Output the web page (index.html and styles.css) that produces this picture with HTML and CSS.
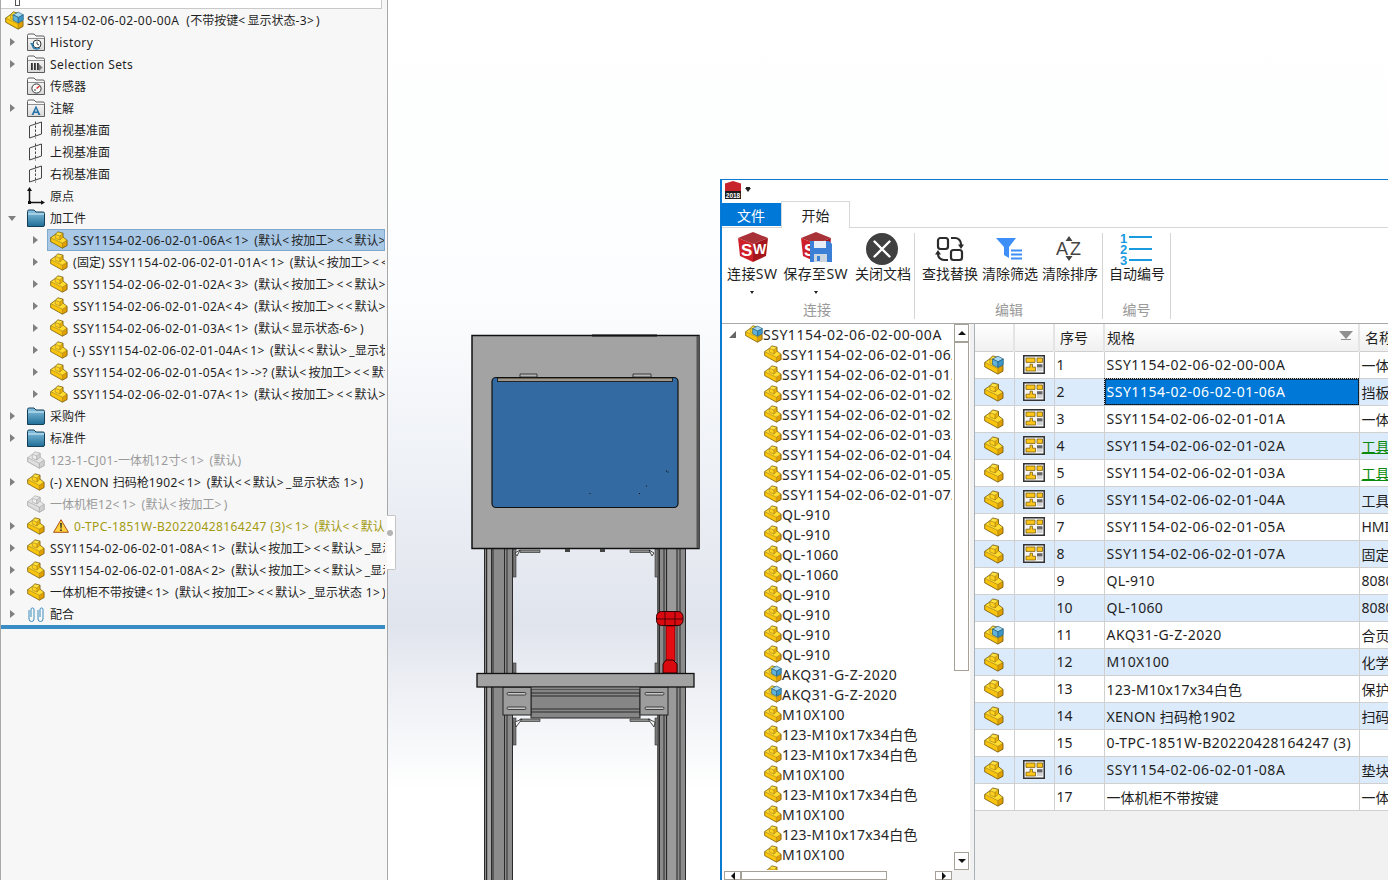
FILE: index.html
```html
<!DOCTYPE html>
<html lang="zh-CN">
<head>
<meta charset="utf-8">
<title>SSY1154-02-06-02-00-00A</title>
<link rel="stylesheet" href="styles.css">
</head>
<body>
<svg class="defs" width="0" height="0" aria-hidden="true">
  <defs>
    <linearGradient id="gFolder" x1="0" y1="0" x2="0" y2="1"><stop offset="0" stop-color="#8cc6e4"/><stop offset="1" stop-color="#1f6d96"/></linearGradient>
    <linearGradient id="gGrey" x1="0" y1="0" x2="0" y2="1"><stop offset="0" stop-color="#ffffff"/><stop offset="1" stop-color="#d8d8d8"/></linearGradient>
    <symbol id="part" viewBox="0 0 20 20">
      <path d="M.7 7.400 L5.900 3.800 L5.900 8 L11 10 L14.500 6.800 L19 10.300 L13.800 13.500 Z" fill="#ffdc2e"/>
      <path d="M5.900 3.800 L8.600 .9 L14.500 2.400 L11 5.500 Z" fill="#ffe23f"/>
      <path d="M5.900 3.800 L11 5.500 L11 10 L5.900 8 Z" fill="#ffd21f"/>
      <path d="M11 5.500 L14.500 2.400 L14.500 6.800 L11 10 Z" fill="#eab308"/>
      <path d="M.7 7.400 L13.800 13.500 L13.800 19.100 L.7 11.800 Z" fill="#f8c40e"/>
      <path d="M13.800 13.500 L19 10.300 L19 16.200 L13.800 19.100 Z" fill="#e0a000"/>
      <path d="M.7 7.400 L13.800 13.500 V19.100 M13.800 13.500 L19 10.300 M5.900 3.800 V8 L11 10 L14.500 6.800 M5.900 3.800 L11 5.500 L14.500 2.400 M11 5.500 V10" fill="none" stroke="#9a7400" stroke-width=".6" stroke-linejoin="round"/>
      <path d="M.7 7.400 L5.900 3.800 L8.600 .9 L14.500 2.400 L14.500 6.800 L19 10.300 L19 16.200 L13.800 19.100 L.7 11.800 Z" fill="none" stroke="#6e5200" stroke-width=".8" stroke-linejoin="round"/>
    </symbol>
    <symbol id="ghost" viewBox="0 0 20 20">
      <g stroke="#adadad" stroke-width=".8" stroke-linejoin="round" fill="#e6e6e6">
        <path d="M.7 7.400 L5.900 3.800 L8.600 .9 L14.500 2.400 L14.500 6.800 L19 10.300 L19 16.200 L13.800 19.100 L.7 11.800 Z"/>
        <path d="M5.900 3.800 L11 5.500 L11 10 L5.900 8 Z" fill="#eeeeee"/>
        <path d="M11 5.500 L14.500 2.400 L14.500 6.800 L11 10 Z" fill="#d4d4d4"/>
        <path d="M.7 7.400 L13.800 13.500 L13.800 19.100 L.7 11.800 Z" fill="#dedede"/>
        <path d="M13.800 13.500 L19 10.300 L19 16.200 L13.800 19.100 Z" fill="#cfcfcf"/>
      </g>
    </symbol>
    <symbol id="assy" viewBox="0 0 20 20">
      <use href="#part" width="20" height="20"/>
      <g stroke="#25607f" stroke-width=".7" stroke-linejoin="round">
        <path d="M8.500 4 L14 1.200 L19.300 4 L14 6.800 Z" fill="#a6d8f2"/>
        <path d="M8.500 4 L14 6.800 L14 12.500 L8.500 9.700 Z" fill="#62b2de"/>
        <path d="M14 6.800 L19.300 4 L19.300 9.700 L14 12.500 Z" fill="#3d95c8"/>
      </g>
    </symbol>
    <symbol id="folder-blue" viewBox="0 0 18 18">
      <path d="M.5 2.500 Q.5 1 2 1 H7 L9 3 H16 Q17.500 3 17.500 4.500 V16 Q17.500 17.500 16 17.500 H.5 Z" fill="url(#gFolder)" stroke="#143f58"/>
      <path d="M1 5 H17" stroke="#d6eef9" stroke-width="1"/>
    </symbol>
    <symbol id="folder-grey" viewBox="0 0 18 18">
      <path d="M.5 2.500 Q.5 1 2 1 H7 L9 3 H16 Q17.500 3 17.500 4.500 V17.500 H.5 Z" fill="url(#gGrey)" stroke="#5c5c5c"/>
      <path d="M1 5.500 H17" stroke="#8f8f8f" stroke-width="1"/>
    </symbol>
    <symbol id="f-history" viewBox="0 0 18 18">
      <use href="#folder-grey" width="18" height="18"/>
      <circle cx="10" cy="11" r="4" fill="#fff" stroke="#333" stroke-width="1"/>
      <path d="M10 8.600 V11 L12 12" fill="none" stroke="#333" stroke-width=".9"/>
      <path d="M5.200 12 A5 5 0 0 0 10 16 A5 5 0 0 0 13 15" fill="none" stroke="#2a7fb6" stroke-width="1.400"/>
      <path d="M3 10 H7 L5.200 13 Z" fill="#2a7fb6"/>
    </symbol>
    <symbol id="f-sets" viewBox="0 0 18 18">
      <use href="#folder-grey" width="18" height="18"/>
      <path d="M4 8 H5.800 V15 H4 Z M7 8 H8.800 V15 H7 Z M10 8 H11.800 V15 H10 Z" fill="#333"/>
      <path d="M12 9 L15.500 12.500 L12 16 Z" fill="#777"/>
    </symbol>
    <symbol id="f-sensor" viewBox="0 0 18 18">
      <use href="#folder-grey" width="18" height="18"/>
      <circle cx="9.500" cy="11.500" r="4.600" fill="#fff" stroke="#333" stroke-width="1"/>
      <path d="M9.500 11.500 L12.500 9" stroke="#d8352a" stroke-width="1.500"/>
      <path d="M7 13 H9" stroke="#333" stroke-width="1"/>
    </symbol>
    <symbol id="f-note" viewBox="0 0 18 18">
      <use href="#folder-grey" width="18" height="18"/>
      <path d="M9 6.500 L13.500 16 H11.400 L10.600 14 H7.300 L6.500 16 H4.500 Z M8 12.400 H10 L9 9.600 Z" fill="#2573a8"/>
    </symbol>
    <symbol id="plane" viewBox="0 0 16 18">
      <path d="M1.500 5 L13.500 1 V13 L1.500 17 Z" fill="none" stroke="#444" stroke-width="1"/>
      <path d="M7.500 .5 V17.500" stroke="#444" stroke-width="1" stroke-dasharray="2.400 1.600"/>
    </symbol>
    <symbol id="origin" viewBox="0 0 18 18">
      <path d="M2.500 3 V15.500 H15" fill="none" stroke="#111" stroke-width="1.500"/>
      <path d="M2.500 0 L5 4 H0 Z M18 15.500 L14 13.200 V17.800 Z" fill="#111"/>
      <rect x="1" y="14" width="3" height="3" fill="#111"/>
    </symbol>
    <symbol id="mates" viewBox="0 0 18 18">
      <path d="M2 5 V14 A2.400 2.400 0 0 0 7 14 V4 A1.600 1.600 0 0 0 4 4 V12" fill="none" stroke="#3a8dbd" stroke-width="1"/>
      <path d="M11 5 V14 A2.400 2.400 0 0 0 16 14 V4 A1.600 1.600 0 0 0 13 4 V12" fill="none" stroke="#3a8dbd" stroke-width="1"/>
    </symbol>
    <symbol id="warn" viewBox="0 0 16 14">
      <path d="M8 .7 L15.400 13.300 H.6 Z" fill="#ffd23f" stroke="#a8501a" stroke-width="1" stroke-linejoin="round"/>
      <path d="M7.200 4 H8.800 L8.500 9.500 H7.500 Z M7.200 10.400 H8.800 V12 H7.200 Z" fill="#222"/>
    </symbol>
    <symbol id="doc" viewBox="0 0 22 19">
      <rect x=".75" y=".75" width="20.500" height="17.500" fill="#f4f4f4" stroke="#333" stroke-width="1.500"/>
      <path d="M3 3 H12 V7.400 H3 Z M14 3 H19.500 V7.400 H14 Z M7 9.200 H9.500 V12.200 H12.500 V16 H3 V12.200 H7 Z" fill="#ffc61a" stroke="#6e5200" stroke-width=".7"/>
      <rect x="14" y="9.200" width="5.500" height="3.400" fill="#666"/>
      <rect x="14" y="12.600" width="5.500" height="3.400" fill="#d2d2d2"/>
    </symbol>
    <symbol id="sw" viewBox="0 0 30 30">
      <path d="M15 0 L30 6 L15 12 L0 6 Z" fill="#a83238"/>
      <path d="M0 6 L15 12 V30 L2 24 Z" fill="#cf1f28"/>
      <path d="M15 12 L30 6 L28 24 L15 30 Z" fill="#a5161c"/>
      <text x="3" y="24" class="sw-letter">S</text>
      <text x="15" y="22" class="sw-letter sw-w">W</text>
    </symbol>
  </defs>
</svg>

<aside class="side">
  <div class="search"><span class="search-mark"></span></div>
  <div class="tree">
    <div class="row root"><div class="cell"><svg class="ic-root"><use href="#assy"/></svg><span>SSY1154-02-06-02-00-00A&nbsp; (<em>不带按键</em><b>&lt;</b><em>显示状态</em>-3<b>&gt;</b>)</span></div></div>
    <div class="row l1"><i class="arr"></i><div class="cell"><svg class="ic"><use href="#f-history"/></svg><span>History</span></div></div>
    <div class="row l1"><i class="arr"></i><div class="cell"><svg class="ic"><use href="#f-sets"/></svg><span>Selection Sets</span></div></div>
    <div class="row l1"><i class="arr none"></i><div class="cell"><svg class="ic"><use href="#f-sensor"/></svg><span><em>传感器</em></span></div></div>
    <div class="row l1"><i class="arr"></i><div class="cell"><svg class="ic"><use href="#f-note"/></svg><span><em>注解</em></span></div></div>
    <div class="row l1"><i class="arr none"></i><div class="cell"><svg class="ic"><use href="#plane"/></svg><span><em>前视基准面</em></span></div></div>
    <div class="row l1"><i class="arr none"></i><div class="cell"><svg class="ic"><use href="#plane"/></svg><span><em>上视基准面</em></span></div></div>
    <div class="row l1"><i class="arr none"></i><div class="cell"><svg class="ic"><use href="#plane"/></svg><span><em>右视基准面</em></span></div></div>
    <div class="row l1"><i class="arr none"></i><div class="cell"><svg class="ic"><use href="#origin"/></svg><span><em>原点</em></span></div></div>
    <div class="row l1"><i class="arr open"></i><div class="cell"><svg class="ic"><use href="#folder-blue"/></svg><span><em>加工件</em></span></div></div>
    <div class="row l2"><i class="arr"></i><div class="cell sel"><svg class="ic"><use href="#part"/></svg><span>SSY1154-02-06-02-01-06A<b>&lt;</b>1<b>&gt;</b> (<em>默认</em><b>&lt;</b><em>按加工</em><b>&gt;&lt;&lt;</b><em>默认</em><b>&gt;</b>_<em>显示状态</em> 1<b>&gt;</b>)</span></div></div>
    <div class="row l2"><i class="arr"></i><div class="cell"><svg class="ic"><use href="#part"/></svg><span>(<em>固定</em>) SSY1154-02-06-02-01-01A<b>&lt;</b>1<b>&gt;</b> (<em>默认</em><b>&lt;</b><em>按加工</em><b>&gt;&lt;&lt;</b><em>默认</em><b>&gt;</b>_<em>显示状态</em> 1<b>&gt;</b>)</span></div></div>
    <div class="row l2"><i class="arr"></i><div class="cell"><svg class="ic"><use href="#part"/></svg><span>SSY1154-02-06-02-01-02A<b>&lt;</b>3<b>&gt;</b> (<em>默认</em><b>&lt;</b><em>按加工</em><b>&gt;&lt;&lt;</b><em>默认</em><b>&gt;</b>_<em>显示状态</em> 1<b>&gt;</b>)</span></div></div>
    <div class="row l2"><i class="arr"></i><div class="cell"><svg class="ic"><use href="#part"/></svg><span>SSY1154-02-06-02-01-02A<b>&lt;</b>4<b>&gt;</b> (<em>默认</em><b>&lt;</b><em>按加工</em><b>&gt;&lt;&lt;</b><em>默认</em><b>&gt;</b>_<em>显示状态</em> 1<b>&gt;</b>)</span></div></div>
    <div class="row l2"><i class="arr"></i><div class="cell"><svg class="ic"><use href="#part"/></svg><span>SSY1154-02-06-02-01-03A<b>&lt;</b>1<b>&gt;</b> (<em>默认</em><b>&lt;</b><em>显示状态</em>-6<b>&gt;</b>)</span></div></div>
    <div class="row l2"><i class="arr"></i><div class="cell"><svg class="ic"><use href="#part"/></svg><span>(-) SSY1154-02-06-02-01-04A<b>&lt;</b>1<b>&gt;</b> (<em>默认</em><b>&lt;&lt;</b><em>默认</em><b>&gt;</b>_<em>显示状态</em> 1<b>&gt;</b>)</span></div></div>
    <div class="row l2"><i class="arr"></i><div class="cell"><svg class="ic"><use href="#part"/></svg><span>SSY1154-02-06-02-01-05A<b>&lt;</b>1<b>&gt;</b>-&gt;? (<em>默认</em><b>&lt;</b><em>按加工</em><b>&gt;&lt;&lt;</b><em>默认</em><b>&gt;</b>_<em>显示状态</em> 1<b>&gt;</b>)</span></div></div>
    <div class="row l2"><i class="arr"></i><div class="cell"><svg class="ic"><use href="#part"/></svg><span>SSY1154-02-06-02-01-07A<b>&lt;</b>1<b>&gt;</b> (<em>默认</em><b>&lt;</b><em>按加工</em><b>&gt;&lt;&lt;</b><em>默认</em><b>&gt;</b>_<em>显示状态</em> 1<b>&gt;</b>)</span></div></div>
    <div class="row l1"><i class="arr"></i><div class="cell"><svg class="ic"><use href="#folder-blue"/></svg><span><em>采购件</em></span></div></div>
    <div class="row l1"><i class="arr"></i><div class="cell"><svg class="ic"><use href="#folder-blue"/></svg><span><em>标准件</em></span></div></div>
    <div class="row l1 dim"><i class="arr none"></i><div class="cell"><svg class="ic"><use href="#ghost"/></svg><span>123-1-CJ01-<em>一体机</em>12<em>寸</em><b>&lt;</b>1<b>&gt;</b> (<em>默认</em>)</span></div></div>
    <div class="row l1"><i class="arr"></i><div class="cell"><svg class="ic"><use href="#part"/></svg><span>(-) XENON <em>扫码枪</em>1902<b>&lt;</b>1<b>&gt;</b> (<em>默认</em><b>&lt;&lt;</b><em>默认</em><b>&gt;</b>_<em>显示状态</em> 1<b>&gt;</b>)</span></div></div>
    <div class="row l1 dim"><i class="arr none"></i><div class="cell"><svg class="ic"><use href="#ghost"/></svg><span><em>一体机柜</em>12<b>&lt;</b>1<b>&gt;</b> (<em>默认</em><b>&lt;</b><em>按加工</em><b>&gt;</b>)</span></div></div>
    <div class="row l1 olive"><i class="arr"></i><div class="cell"><svg class="ic"><use href="#part"/></svg><svg class="ic-warn"><use href="#warn"/></svg><span>0-TPC-1851W-B20220428164247 (3)<b>&lt;</b>1<b>&gt;</b> (<em>默认</em><b>&lt;&lt;</b><em>默认</em><b>&gt;</b>_<em>显示状态</em> 1<b>&gt;</b>)</span></div></div>
    <div class="row l1"><i class="arr"></i><div class="cell"><svg class="ic"><use href="#part"/></svg><span>SSY1154-02-06-02-01-08A<b>&lt;</b>1<b>&gt;</b> (<em>默认</em><b>&lt;</b><em>按加工</em><b>&gt;&lt;&lt;</b><em>默认</em><b>&gt;</b>_<em>显示状态</em> 1<b>&gt;</b>)</span></div></div>
    <div class="row l1"><i class="arr"></i><div class="cell"><svg class="ic"><use href="#part"/></svg><span>SSY1154-02-06-02-01-08A<b>&lt;</b>2<b>&gt;</b> (<em>默认</em><b>&lt;</b><em>按加工</em><b>&gt;&lt;&lt;</b><em>默认</em><b>&gt;</b>_<em>显示状态</em> 1<b>&gt;</b>)</span></div></div>
    <div class="row l1"><i class="arr"></i><div class="cell"><svg class="ic"><use href="#part"/></svg><span><em>一体机柜不带按键</em><b>&lt;</b>1<b>&gt;</b> (<em>默认</em><b>&lt;</b><em>按加工</em><b>&gt;&lt;&lt;</b><em>默认</em><b>&gt;</b>_<em>显示状态</em> 1<b>&gt;</b>)</span></div></div>
    <div class="row l1"><i class="arr"></i><div class="cell"><svg class="ic"><use href="#mates"/></svg><span><em>配合</em></span></div></div>
  </div>
  <div class="tree-end"></div>
  <div class="grip"><span class="grip-dot"></span></div>
</aside>

<main class="canvas">
  <svg class="model" viewBox="388 0 1000 880" aria-hidden="true">
    <!-- legs -->
    <g>
      <rect x="484" y="549" width="29" height="331" fill="#8b8b8b"/>
      <rect x="657" y="549" width="29" height="331" fill="#8b8b8b"/>
      <path d="M484.500 549 V880 M486.500 549 V880 M491.500 549 V880 M493 549 V880 M504.500 549 V880 M507 549 V880 M512.500 549 V880 M658 549 V880 M659.500 549 V880 M664 549 V880 M666.500 549 V880 M677 549 V880 M680 549 V880 M685.500 549 V880" stroke="#2a2a2a" stroke-width="1"/>
      <rect x="488" y="549" width="3" height="331" fill="#a6a6a6"/>
      <rect x="668" y="549" width="8" height="331" fill="#9a9a9a"/>
      <rect x="513" y="549" width="3" height="28" fill="#777" stroke="#333" stroke-width=".6"/>
      <rect x="655" y="549" width="3" height="28" fill="#777" stroke="#333" stroke-width=".6"/>
      <rect x="513" y="663" width="3" height="10" fill="#777" stroke="#333" stroke-width=".6"/>
      <rect x="655" y="663" width="3" height="10" fill="#777" stroke="#333" stroke-width=".6"/>
      <rect x="513" y="718" width="3" height="27" fill="#777" stroke="#333" stroke-width=".6"/>
      <rect x="655" y="718" width="3" height="27" fill="#777" stroke="#333" stroke-width=".6"/>
    </g>
    <!-- cabinet -->
    <rect x="472" y="335.500" width="227" height="213" fill="#a3a3a3" stroke="#111" stroke-width="1.500"/>
    <path d="M592 335.500 H657" stroke="#111" stroke-width="2"/>
    <rect x="696.500" y="336" width="2.500" height="212" fill="#555"/>
    <rect x="492" y="377.500" width="186" height="130" rx="4" fill="#336aa1" stroke="#111" stroke-width="1.200"/>
    <rect x="497.500" y="378" width="175" height="3.500" fill="#9f9689" stroke="#111" stroke-width=".8"/>
    <path d="M520 374 H537 V377 H520 Z M633 374 H651 V377 H633 Z" fill="#b5b5b5" stroke="#222" stroke-width=".8"/>
    <path d="M589.500 493.500 h1 M639 493.500 h1 M646 486 h1 M666 471 h1 M667.500 472 h1" stroke="#111" stroke-width="1"/>
    <!-- fittings under the cabinet -->
    <path d="M520 550 H540 V552.500 H520 Z M630 550 H650 V552.500 H630 Z" fill="#8f8f8f" stroke="#333" stroke-width=".7"/>
    <path d="M515 553 L520 550 L517 556 Z M654 553 L649 550 L652 556 Z" fill="#eee" stroke="#222" stroke-width=".8"/>
    <rect x="565" y="549" width="5" height="3" fill="#444"/><rect x="600" y="549" width="5" height="3" fill="#444"/>
    <!-- red tower -->
    <rect x="666" y="626" width="9" height="35" fill="#e50d12" stroke="#5a0000" stroke-width=".8"/>
    <rect x="656.500" y="611.500" width="26.500" height="14" rx="5" fill="#d8090f" stroke="#300" stroke-width="1"/>
    <path d="M657 619 H683 M665 612 V625 M675 612 V625" stroke="#300" stroke-width=".8"/>
    <path d="M663 673 V664 L666 660 H673 L677 664 V673 Z" fill="#d8090f" stroke="#300" stroke-width="1"/>
    <!-- crossbeam and brackets -->
    <rect x="531" y="689" width="109" height="29" fill="#868686" stroke="#222" stroke-width="1"/>
    <path d="M531 693 H640 M531 696 H640 M531 709 H640 M531 712 H640" stroke="#2a2a2a" stroke-width="1"/>
    <rect x="503" y="687" width="28" height="28" fill="#9d9d9d" stroke="#222" stroke-width="1"/>
    <rect x="640" y="687" width="28" height="28" fill="#9d9d9d" stroke="#222" stroke-width="1"/>
    <g fill="#c8c8c8" stroke="#222" stroke-width=".8">
      <rect x="507" y="692.500" width="19" height="2.500" rx="1.200"/><rect x="507" y="707" width="19" height="2.500" rx="1.200"/>
      <rect x="645" y="692.500" width="19" height="2.500" rx="1.200"/><rect x="645" y="707" width="19" height="2.500" rx="1.200"/>
    </g>
    <path d="M520 719 H540 V721.500 H520 Z M630 719 H650 V721.500 H630 Z" fill="#8f8f8f" stroke="#333" stroke-width=".7"/>
    <path d="M515 722 L522 719 L516 727 Z M655 722 L648 719 L654 727 Z" fill="#f4f4f4" stroke="#222" stroke-width=".8"/>
    <!-- table top -->
    <rect x="477" y="673.500" width="217" height="13.500" fill="#a2a2a2" stroke="#111" stroke-width="1.300"/>
  </svg>

  <section class="window">
    <header class="titlebar">
      <svg class="app-ico" viewBox="0 0 16 18"><path d="M8 0 L16 2.500 V11 H0 V2.500 Z" fill="#c8242b"/><rect y="10" width="16" height="8" fill="#1c1c1c"/><text x="8" y="16.600" class="year">2018</text></svg>
      <i class="qa-arrow"></i>
    </header>
    <nav class="tabs">
      <span class="tab file">文件</span>
      <span class="tab home">开始</span>
    </nav>
    <div class="ribbon">
      <div class="group g1">
        <div class="btns">
          <div class="btn"><svg class="ri"><use href="#sw" x="11" y="2" width="30" height="30"/></svg><span class="sw-label">连接SW</span><i class="drop"></i></div>
          <div class="btn"><svg class="ri"><use href="#sw" x="17" y="2" width="30" height="30"/>
            <path d="M26 11 H45 L48 14 V32 H26 Z" fill="#3b7fd6"/><rect x="30" y="11" width="12" height="7" fill="#e8eef6"/><rect x="30" y="24" width="13" height="8" fill="#cdd6e0"/><rect x="33" y="26" width="3" height="5" fill="#3b7fd6"/></svg><span class="sw-label">保存至SW</span><i class="drop"></i></div>
          <div class="btn"><svg class="ri"><circle cx="27" cy="19" r="16" fill="#404040"/><path d="M19.500 11.500 L34.500 26.500 M34.500 11.500 L19.500 26.500" stroke="#fff" stroke-width="2.400" stroke-linecap="round"/></svg><span>关闭文档</span></div>
        </div>
        <div class="glabel">连接</div>
      </div>
      <div class="group g2">
        <div class="btns">
          <div class="btn"><svg class="ri"><g fill="none" stroke="#2b2b2b" stroke-width="2.200"><rect x="16" y="8" width="10" height="11" rx="2.500"/><rect x="29" y="20" width="11" height="10" rx="2.500"/><path d="M29 8 H33 A6 6 0 0 1 39 14 V16"/><path d="M26 30 H22 A6 6 0 0 1 16 24 V22"/></g><path d="M39 19 L36 14.500 H42 Z M16 20 L13 24.500 H19 Z" fill="#2b2b2b"/></svg><span>查找替换</span></div>
          <div class="btn"><svg class="ri"><path d="M14 8 H34 L27 17 V28 L22 25 V17 Z" fill="#3d8ef8"/><path d="M29 20.500 H40 M29 24.500 H40 M29 28.500 H40" stroke="#3d8ef8" stroke-width="2"/></svg><span>清除筛选</span></div>
          <div class="btn"><svg class="ri"><text x="14" y="25" class="az">A</text><text x="28" y="25" class="az">Z</text><path d="M27 6 L30.500 11 H23.500 Z M27 31 L30.500 26 H23.500 Z" fill="#444"/></svg><span>清除排序</span></div>
        </div>
        <div class="glabel">编辑</div>
      </div>
      <div class="group g3">
        <div class="btns">
          <div class="btn"><svg class="ri"><text x="11" y="13" class="num">1</text><text x="11" y="24" class="num">2</text><text x="11" y="35" class="num">3</text><path d="M20 7 H43 M20 19 H43 M20 30 H43" stroke="#1a9be0" stroke-width="1.800"/></svg><span>自动编号</span></div>
        </div>
        <div class="glabel">编号</div>
      </div>
    </div>
    <div class="workspace">
      <div class="treebox">
        <div class="t-list">
          <div class="t-row t-root"><i class="t-open"></i><svg class="t-ic"><use href="#assy"/></svg><span class="w">SSY1154-02-06-02-00-00A</span></div>
          <div class="t-row"><svg class="t-ic"><use href="#part"/></svg><span class="w">SSY1154-02-06-02-01-06A</span></div>
          <div class="t-row"><svg class="t-ic"><use href="#part"/></svg><span class="w">SSY1154-02-06-02-01-01A</span></div>
          <div class="t-row"><svg class="t-ic"><use href="#part"/></svg><span class="w">SSY1154-02-06-02-01-02A</span></div>
          <div class="t-row"><svg class="t-ic"><use href="#part"/></svg><span class="w">SSY1154-02-06-02-01-02A</span></div>
          <div class="t-row"><svg class="t-ic"><use href="#part"/></svg><span class="w">SSY1154-02-06-02-01-03A</span></div>
          <div class="t-row"><svg class="t-ic"><use href="#part"/></svg><span class="w">SSY1154-02-06-02-01-04A</span></div>
          <div class="t-row"><svg class="t-ic"><use href="#part"/></svg><span class="w">SSY1154-02-06-02-01-05A</span></div>
          <div class="t-row"><svg class="t-ic"><use href="#part"/></svg><span class="w">SSY1154-02-06-02-01-07A</span></div>
          <div class="t-row"><svg class="t-ic"><use href="#part"/></svg><span class="k">QL-910</span></div>
          <div class="t-row"><svg class="t-ic"><use href="#part"/></svg><span class="k">QL-910</span></div>
          <div class="t-row"><svg class="t-ic"><use href="#part"/></svg><span class="k">QL-1060</span></div>
          <div class="t-row"><svg class="t-ic"><use href="#part"/></svg><span class="k">QL-1060</span></div>
          <div class="t-row"><svg class="t-ic"><use href="#part"/></svg><span class="k">QL-910</span></div>
          <div class="t-row"><svg class="t-ic"><use href="#part"/></svg><span class="k">QL-910</span></div>
          <div class="t-row"><svg class="t-ic"><use href="#part"/></svg><span class="k">QL-910</span></div>
          <div class="t-row"><svg class="t-ic"><use href="#part"/></svg><span class="k">QL-910</span></div>
          <div class="t-row"><svg class="t-ic"><use href="#assy"/></svg><span class="w">AKQ31-G-Z-2020</span></div>
          <div class="t-row"><svg class="t-ic"><use href="#assy"/></svg><span class="w">AKQ31-G-Z-2020</span></div>
          <div class="t-row"><svg class="t-ic"><use href="#part"/></svg><span class="k">M10X100</span></div>
          <div class="t-row"><svg class="t-ic"><use href="#part"/></svg><span class="k">123-M10x17x34白色</span></div>
          <div class="t-row"><svg class="t-ic"><use href="#part"/></svg><span class="k">123-M10x17x34白色</span></div>
          <div class="t-row"><svg class="t-ic"><use href="#part"/></svg><span class="k">M10X100</span></div>
          <div class="t-row"><svg class="t-ic"><use href="#part"/></svg><span class="k">123-M10x17x34白色</span></div>
          <div class="t-row"><svg class="t-ic"><use href="#part"/></svg><span class="k">M10X100</span></div>
          <div class="t-row"><svg class="t-ic"><use href="#part"/></svg><span class="k">123-M10x17x34白色</span></div>
          <div class="t-row"><svg class="t-ic"><use href="#part"/></svg><span class="k">M10X100</span></div>
          <div class="t-row"><svg class="t-ic"><use href="#part"/></svg></div>
        </div>
        <div class="vbar">
          <div class="sb-btn"><i class="tri-up"></i></div>
          <div class="sb-thumb"></div>
          <div class="sb-track"></div>
          <div class="sb-btn"><i class="tri-down"></i></div>
        </div>
        <div class="hbar">
          <div class="sb-btn h"><i class="tri-left"></i></div>
          <div class="sb-thumb h"></div>
          <div class="sb-track"></div>
          <div class="sb-btn h"><i class="tri-right"></i></div>
        </div>
        <div class="corner"></div>
      </div>
      <div class="gridbox">
        <table class="grid">
          <colgroup><col class="c1"><col class="c2"><col class="c3"><col class="c4"><col class="c5"></colgroup>
          <thead>
            <tr><th></th><th></th><th class="pad">序号</th><th class="spec">规格<i class="sort"></i></th><th class="pad">名称</th></tr>
          </thead>
          <tbody>
            <tr><td class="i"><svg class="g-part"><use href="#assy"/></svg></td><td class="i"><svg class="g-doc"><use href="#doc"/></svg></td><td>1</td><td class="w">SSY1154-02-06-02-00-00A</td><td>一体机</td></tr>
            <tr class="alt"><td class="i"><svg class="g-part"><use href="#part"/></svg></td><td class="i"><svg class="g-doc"><use href="#doc"/></svg></td><td>2</td><td class="w current">SSY1154-02-06-02-01-06A</td><td>挡板</td></tr>
            <tr><td class="i"><svg class="g-part"><use href="#part"/></svg></td><td class="i"><svg class="g-doc"><use href="#doc"/></svg></td><td>3</td><td class="w">SSY1154-02-06-02-01-01A</td><td>一体机</td></tr>
            <tr class="alt"><td class="i"><svg class="g-part"><use href="#part"/></svg></td><td class="i"><svg class="g-doc"><use href="#doc"/></svg></td><td>4</td><td class="w">SSY1154-02-06-02-01-02A</td><td class="green">工具</td></tr>
            <tr><td class="i"><svg class="g-part"><use href="#part"/></svg></td><td class="i"><svg class="g-doc"><use href="#doc"/></svg></td><td>5</td><td class="w">SSY1154-02-06-02-01-03A</td><td class="green">工具</td></tr>
            <tr class="alt"><td class="i"><svg class="g-part"><use href="#part"/></svg></td><td class="i"><svg class="g-doc"><use href="#doc"/></svg></td><td>6</td><td class="w">SSY1154-02-06-02-01-04A</td><td>工具</td></tr>
            <tr><td class="i"><svg class="g-part"><use href="#part"/></svg></td><td class="i"><svg class="g-doc"><use href="#doc"/></svg></td><td>7</td><td class="w">SSY1154-02-06-02-01-05A</td><td>HMI</td></tr>
            <tr class="alt"><td class="i"><svg class="g-part"><use href="#part"/></svg></td><td class="i"><svg class="g-doc"><use href="#doc"/></svg></td><td>8</td><td class="w">SSY1154-02-06-02-01-07A</td><td>固定</td></tr>
            <tr><td class="i"><svg class="g-part"><use href="#part"/></svg></td><td></td><td>9</td><td class="k">QL-910</td><td>8080</td></tr>
            <tr class="alt"><td class="i"><svg class="g-part"><use href="#part"/></svg></td><td></td><td>10</td><td class="k">QL-1060</td><td>8080</td></tr>
            <tr><td class="i"><svg class="g-part"><use href="#assy"/></svg></td><td></td><td>11</td><td class="w">AKQ31-G-Z-2020</td><td>合页</td></tr>
            <tr class="alt"><td class="i"><svg class="g-part"><use href="#part"/></svg></td><td></td><td>12</td><td class="k">M10X100</td><td>化学</td></tr>
            <tr><td class="i"><svg class="g-part"><use href="#part"/></svg></td><td></td><td>13</td><td class="k">123-M10x17x34白色</td><td>保护</td></tr>
            <tr class="alt"><td class="i"><svg class="g-part"><use href="#part"/></svg></td><td></td><td>14</td><td class="k">XENON 扫码枪1902</td><td>扫码</td></tr>
            <tr><td class="i"><svg class="g-part"><use href="#part"/></svg></td><td></td><td>15</td><td class="m">0-TPC-1851W-B20220428164247 (3)</td><td></td></tr>
            <tr class="alt"><td class="i"><svg class="g-part"><use href="#part"/></svg></td><td class="i"><svg class="g-doc"><use href="#doc"/></svg></td><td>16</td><td class="w">SSY1154-02-06-02-01-08A</td><td>垫块</td></tr>
            <tr><td class="i"><svg class="g-part"><use href="#part"/></svg></td><td></td><td>17</td><td>一体机柜不带按键</td><td>一体机</td></tr>
          </tbody>
        </table>
      </div>
    </div>
  </section>
</main>
</body>
</html>
```

FILE: styles.css
```css
* { box-sizing: border-box; }
html, body { margin: 0; height: 880px; overflow: hidden; }
body {
  display: flex;
  width: 1388px;
  font-family: "Noto Sans", "Noto Sans CJK SC", sans-serif;
  color: #1f1f1f;
  background: #fff;
}
.defs { position: absolute; }
.sw-letter { font: bold 17px "Liberation Sans", sans-serif; fill: #fff; }
.sw-w { font-size: 14px; }

/* feature tree */
.side {
  position: relative;
  z-index: 1;
  flex: 0 0 388px;
  height: 880px;
  background: #f7f7f7;
  border-left: 1px solid #a8a8a8;
  border-right: 1px solid #a8a8a8;
  font-size: 12px;
}
.search {
  height: 9px;
  width: 381px;
  background: #fff;
  border: 1px solid #c9c9c9;
  border-width: 0 1px 1px 0;
}
.search-mark {
  display: block;
  width: 5px;
  height: 6px;
  margin-left: 14px;
  border: 1px solid #555;
  border-top: 0;
}
.tree { width: 384px; }
.row { display: flex; align-items: stretch; height: 22px; overflow: hidden; white-space: nowrap; }
.row span { letter-spacing: .4px; }
.row em { font-style: normal; letter-spacing: 0; }
.row b { font-weight: 400; letter-spacing: 2.2px; }
.root { padding-left: 1px; }
.l1 { padding-left: 9px; }
.l2 { padding-left: 32px; }
.arr { flex: 0 0 14px; align-self: center; height: 0; position: relative; }
.arr::before {
  content: "";
  position: absolute;
  top: -4px;
  left: 0;
  border-left: 5px solid #808080;
  border-top: 4px solid transparent;
  border-bottom: 4px solid transparent;
}
.arr.none::before { display: none; }
.arr.open::before {
  top: -2px;
  left: -2px;
  border-left: 4px solid transparent;
  border-right: 4px solid transparent;
  border-top: 5px solid #808080;
  border-bottom: 0;
}
.cell { flex: 1; display: flex; align-items: center; padding-left: 3px; min-width: 0; overflow: hidden; }
.cell.sel { background: #a8c8e6; outline: 1px solid #7fa8cf; outline-offset: -1px; }
.ic { flex: 0 0 18px; width: 18px; height: 18px; margin-right: 5px; }
.ic-root { flex: 0 0 19px; width: 19px; height: 19px; margin-right: 3px; }
.ic-warn { flex: 0 0 16px; width: 16px; height: 14px; margin: 0 5px 0 3px; }
.dim { color: #9a9a9a; }
.olive { color: #a39a10; }
.tree-end { width: 384px; height: 4px; background: #3a8cc4; }
.grip {
  position: absolute;
  left: 386px;
  top: 515px;
  width: 9px;
  height: 55px;
  background: #fff;
  border: 1px solid #c4c4c4;
  border-left: 0;
  border-radius: 0 2px 2px 0;
}
.grip-dot {
  display: block;
  width: 6px;
  height: 6px;
  margin-top: 14px;
  border-radius: 50%;
  background: #b4b4b4;
}

/* graphics area */
.canvas {
  position: relative;
  flex: 1;
  height: 880px;
  overflow: hidden;
  background: linear-gradient(180deg, #fff 0, #fcfdfe 300px, #eef1f6 470px, #e0e4ed 625px, #eef0f5 690px, #fff 790px);
}
.model { position: absolute; left: 0; top: 0; width: 1000px; height: 880px; }

/* floating window */
.window {
  position: absolute;
  left: 332px;
  top: 179px;
  right: 0;
  bottom: 0;
  display: flex;
  flex-direction: column;
  background: #f1f1f1;
  border-top: 1.500px solid #0a7bd0;
  border-left: 2px solid #0a7bd0;
  font-size: 14px;
}
.titlebar { display: flex; align-items: flex-start; gap: 4px; height: 22px; flex: none; padding: 1px 0 0 3px; background: #fff; }
.app-ico { width: 16px; height: 18px; }
.year { font: bold 6.500px "Liberation Sans", sans-serif; fill: #fff; text-anchor: middle; }
.qa-arrow { width: 0; height: 0; margin-top: 7px; border-left: 3.500px solid transparent; border-right: 3.500px solid transparent; border-top: 4px solid #222; box-shadow: 0 -2px 0 -1px #222; }
.tabs { display: flex; align-items: flex-end; flex: none; height: 26px; background: #fff; border-bottom: 1px solid #d8d8d8; }
.tab { display: flex; align-items: center; justify-content: center; }
.file { width: 60px; height: 23px; margin: 0 0 1px -1px; background: #0078d7; color: #fff; }
.home { width: 69px; height: 27px; margin-bottom: -1px; background: #fff; border: 1px solid #d8d8d8; border-bottom: 0; }
.ribbon { display: flex; flex: none; height: 96px; background: #fff; padding-top: 2px; border-bottom: 1px solid #a8a8a8; }
.group { position: relative; display: flex; flex-direction: column; height: 89px; }
.group::after { content: ""; position: absolute; right: 0; top: 3px; bottom: 0; width: 1px; background: #d4d4d4; }
.g1 { width: 193px; padding-left: 2px; }
.g2 { width: 188px; padding-left: 5px; }
.g3 { width: 68px; padding-left: 4px; }
.btns { display: flex; flex: 1; }
.btn { display: flex; flex-direction: column; align-items: center; white-space: nowrap; line-height: 20px; }
.sw-label { letter-spacing: .4px; }
.g1 .btn { padding: 0 3px; }
.g1 .btn:nth-child(3) { margin-left: 1px; }
.g2 .btn, .g3 .btn { padding: 0 2px; }
.ri { display: block; width: 60px; height: 34px; overflow: visible; }
.g1 .btn:nth-child(1) .ri { width: 50px; }
.g1 .btn:nth-child(2) .ri { width: 64px; }
.g1 .btn:nth-child(3) .ri { width: 56px; }
.g2 .ri, .g3 .ri { width: 56px; }
.drop { display: block; margin-top: 7px; width: 0; height: 0; border-left: 2.500px solid transparent; border-right: 2.500px solid transparent; border-top: 3px solid #222; }
.glabel { height: 18px; padding-right: 5px; line-height: 18px; text-align: center; color: #9a9a9a; }
.az { font: 18px "Liberation Sans", sans-serif; fill: #444; }
.num { font: bold 13px "Liberation Sans", sans-serif; fill: #1a9be0; }

.workspace { display: flex; flex: 1; min-height: 0; }
.treebox {
  flex: 0 0 248px;
  display: grid;
  grid-template-columns: 230px 18px;
  grid-template-rows: 1fr 10px;
  background: #fff;
  overflow: hidden;
}
.t-list { overflow: hidden; }
.t-row { display: flex; align-items: center; height: 20px; padding-left: 42px; white-space: nowrap; color: #262626; }
.k { letter-spacing: .25px; }
.m { letter-spacing: .39px; }
.w { letter-spacing: .52px; }
.t-root { padding-left: 7px; }
.t-open { width: 0; height: 0; margin-right: 9px; border-left: 7px solid transparent; border-bottom: 7px solid #666; }
.t-ic { flex: none; width: 18px; height: 18px; }
.vbar { display: flex; flex-direction: column; padding: 0 1px 0 2px; }
.sb-btn { flex: 0 0 18px; display: flex; align-items: center; justify-content: center; background: #fff; border: 1px solid #a6a196; }
.sb-thumb { flex: 0 0 329px; background: #fff; border: 1px solid #a6a196; }
.sb-track { flex: 1; background: #fff; }
.hbar { display: flex; padding-left: 2px; padding-top: 1px; }
.sb-btn.h { flex: 0 0 17px; }
.sb-thumb.h { flex: 0 0 146px; }
.corner { background: #f1f1f1; }
.tri-up { border-left: 4px solid transparent; border-right: 4px solid transparent; border-bottom: 4px solid #111; }
.tri-down { border-left: 4px solid transparent; border-right: 4px solid transparent; border-top: 4px solid #111; }
.tri-left { border-top: 4px solid transparent; border-bottom: 4px solid transparent; border-right: 4px solid #111; }
.tri-right { border-top: 4px solid transparent; border-bottom: 4px solid transparent; border-left: 4px solid #111; }

.gridbox {
  flex: 1;
  min-width: 0;
  margin-left: 4px;
  background: #f1f1f1;
  border-left: 1px solid #a8b0b8;
  overflow: hidden;
}
.grid { table-layout: fixed; width: 444px; border-collapse: collapse; }
.c1 { width: 39px; }
.c2 { width: 40px; }
.c3 { width: 50px; }
.c4 { width: 255px; }
.c5 { width: 60px; }
.grid th {
  position: relative;
  height: 27px;
  padding: 0 0 0 5px;
  text-align: left;
  font-weight: 400;
  background: linear-gradient(#fff, #f0f0f0);
  border-right: 2px solid #e4e4e4;
  border-bottom: 1px solid #cfcfcf;
}
.grid td {
  height: 27px;
  padding: 0 0 0 2px;
  background: #fff;
  border: 1px solid #d0d0d0;
  border-top: 0;
  border-left: 0;
  white-space: nowrap;
  overflow: hidden;
}
.grid .alt td { background: #dcebfb; }
.grid td.i { padding: 0; text-align: center; line-height: 0; }
.grid td.current {
  background: #0078d7;
  color: #fff;
  outline: 1px dotted #111;
  outline-offset: -1px;
  box-shadow: inset 0 0 0 1px #0b2f52;
}
.grid td.green { color: #0a8a0a; text-decoration: underline; }
.g-part { width: 20px; height: 20px; vertical-align: middle; }
.g-doc { width: 22px; height: 19px; vertical-align: middle; }
.spec { padding-left: 2px !important; }
.sort {
  position: absolute;
  right: 5px;
  top: 7px;
  width: 0;
  height: 0;
  border-left: 7px solid transparent;
  border-right: 7px solid transparent;
  border-top: 8px solid #909090;
  box-shadow: 0 3px 0 -2px #909090;
}
```
